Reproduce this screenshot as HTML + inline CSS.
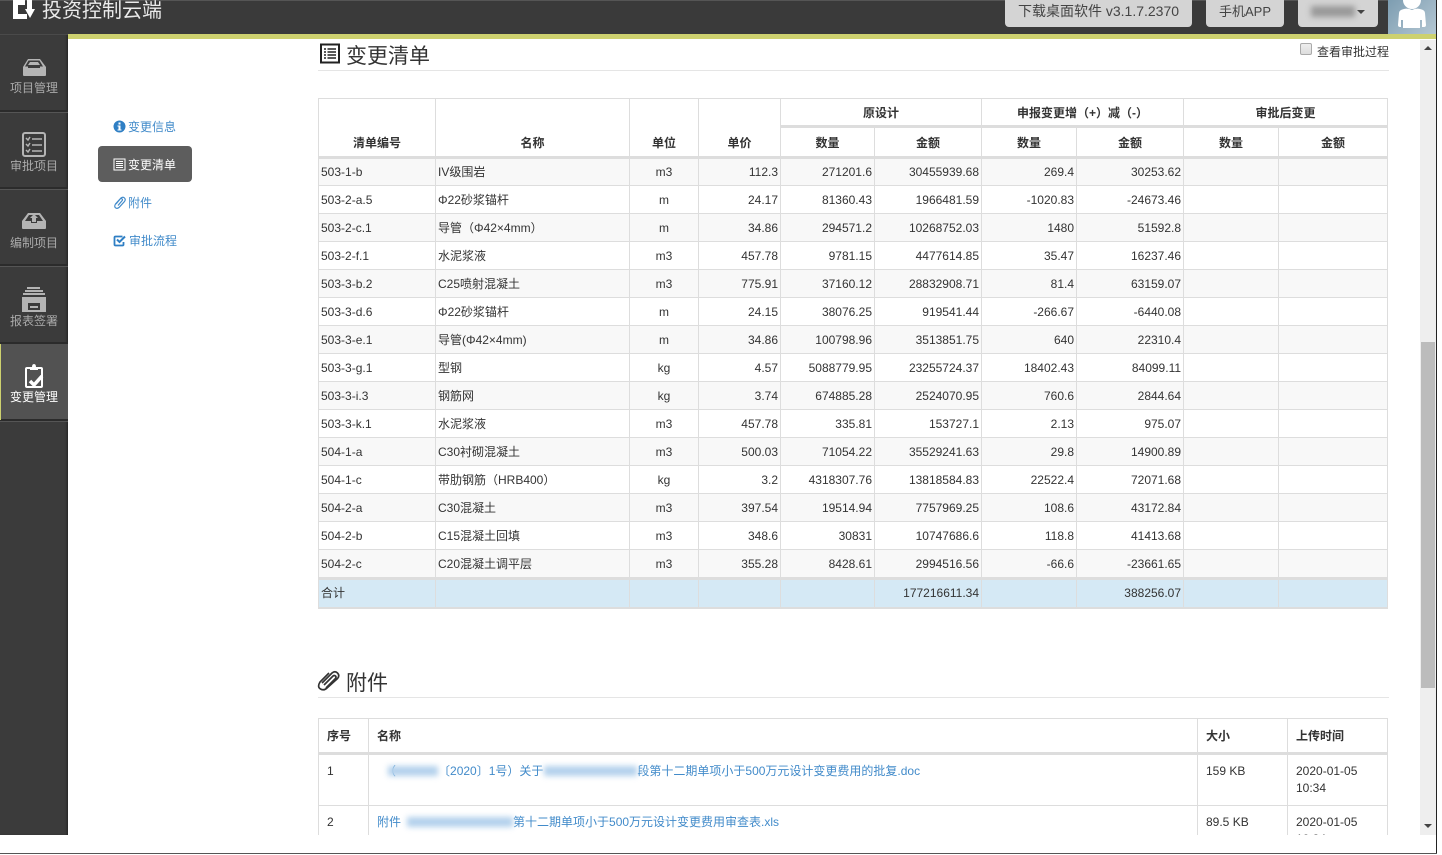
<!DOCTYPE html>
<html lang="zh-CN"><head><meta charset="utf-8"><title>变更清单</title>
<style>
html,body{margin:0;padding:0;background:#fff;overflow:hidden}
body{width:1442px;height:855px;position:relative;font:12px/18px "Liberation Sans","Noto Sans CJK SC",sans-serif;color:#333}
.a{position:absolute}
#frameR{left:1436px;top:0;width:1px;height:854px;background:#222}
#frameB{left:0;top:853px;width:1437px;height:1px;background:#555}
#hdr{left:0;top:0;width:1436px;height:34px;background:#3a3a3a;border-top:1px solid #555;box-sizing:border-box}
#logo{left:42px;top:-3px;font-size:20px;line-height:28px;color:#eaeaea;white-space:nowrap}
.btn{top:0;height:27px;background:#d4d4d4;border-radius:0 0 4px 4px;text-align:center;line-height:23px;font-size:14px;color:#444;white-space:nowrap}
#avatar{left:1388px;top:0;width:48px;height:34px;background:linear-gradient(135deg,#7d9db1,#b4c7d3);overflow:hidden}
#band{left:68px;top:34px;width:1368px;height:5px;background:#cdd16f}
#side{left:0;top:34px;width:68px;height:801px;background:#3b3b3b;box-shadow:inset -2px 0 2px -1px #222}
.nav{left:0;width:68px;height:76px;border-bottom:2px solid #2b2b2b;box-shadow:0 1px 0 #555;text-align:center;color:#aaa}
.nav span{position:absolute;left:0;right:0;white-space:nowrap}
.nav svg{position:absolute;left:0;top:0}
.sub{white-space:nowrap;color:#428bca;line-height:18px}
.sub svg{position:absolute;left:-15px;top:2px}
#pill{left:98px;top:146px;width:94px;height:36px;background:#5d5d5d;border-radius:4px}
.h{font-size:21px;line-height:30px;color:#333;white-space:nowrap}
.hr{height:1px;background:#e5e5e5}
table{position:absolute;border-collapse:collapse;table-layout:fixed;background:#fff}
td,th{border:1px solid #ddd;padding:0 2px;overflow:hidden;white-space:nowrap;box-sizing:border-box}
#t1{left:318px;top:98px;width:1069px}
#t1 td{height:28px;line-height:18px}
#t1 th{font-weight:bold;vertical-align:middle;text-align:center}
#t1 .r1 th{height:28px;padding-top:1px}
#t1 .r2 th{height:31px;padding-top:1px}
#t1 .r1 th.b{border-bottom:3px solid #ddd}
#t1 .r2 th{border-bottom:3px solid #ddd}
#t1 th.v{vertical-align:bottom;padding-bottom:4px;border-bottom:3px solid #ddd}
#t1 tbody tr:nth-child(odd) td{background:#f8f8f8}
.c{text-align:center}.n{text-align:right}
#t1 tr.last td{height:29px}
#t1 tr.tot td{background:#d5e9f5;border-top:3px solid #ddd;border-bottom:2px solid #ddd;height:29px}
#clip{left:318px;top:718px;width:1070px;height:117px;overflow:hidden}
#t2{left:0;top:0;width:1070px}
#t2 th{text-align:left;height:35px;padding:0 8px;border-bottom:3px solid #ddd;font-weight:bold}
#t2 td{padding:8px;vertical-align:top;white-space:normal;line-height:17px;height:51px}
#t2 a{color:#428bca;text-decoration:none;white-space:nowrap}
.bl{display:inline-block;height:10px;background:#b3d1ec;filter:blur(3px);vertical-align:-1px}
#track{left:1420px;top:40px;width:16px;height:795px;background:#eee}
#thumb{left:1421px;top:342px;width:14px;height:346px;background:#bcbcbc}
.up{left:1424px;top:46px;width:0;height:0;border:4px solid transparent;border-top:0;border-bottom:4px solid #444}
.dn{left:1424px;top:824px;width:0;height:0;border:4px solid transparent;border-bottom:0;border-top:4px solid #444}
</style></head><body>

<div class="a" id="hdr"></div>
<svg class="a" style="left:13px;top:0" width="22" height="21" viewBox="0 0 22 21"><path fill="#fff" d="M0 0h12v5H5v9h9v5H0z"/><path fill="#fff" d="M14 0h5v9h3l-5 9-5-9h2z"/></svg>
<div class="a" id="logo">投资控制云端</div>
<div class="a btn" style="left:1005px;width:187px">下载桌面软件 v3.1.7.2370</div>
<div class="a btn" style="left:1206px;width:78px;font-size:13px">手机APP</div>
<div class="a btn" style="left:1298px;width:80px"><span style="position:absolute;left:13px;top:6px;width:44px;height:11px;background:#999;filter:blur(3px)"></span><span style="position:absolute;left:59px;top:10px;border:4px solid transparent;border-bottom:0;border-top:4px solid #444"></span></div>
<div class="a" id="avatar"><svg width="48" height="34" viewBox="0 0 48 34"><circle cx="24" cy="0" r="9" fill="#fff"/><path fill="#fff" d="M11 13q0-3 5-4 4-1 8 1 4-2 8-1 5 1 5 4l1 12q0 2-2 2h-2v-7h-2v8H15v-8h-2v7h-1q-2 0-2-2z"/></svg></div>
<div class="a" id="band"></div>

<div class="a" id="side"></div>
<div class="a nav" style="top:34px;height:75px;border-top:1px solid #4a4a4a">
<svg width="68" height="50"><path fill="#b4b4b4" d="M28 24h12l6 8v8q0 1-1 1H24q-1 0-1-1v-8z"/><path fill="#3b3b3b" d="M28.500 25.500h11l3.500 6h-3v1.500h-12v-1.500h-3z"/><path fill="#b4b4b4" d="M30 27h8l2 3H28z"/></svg>
<span style="top:44px">项目管理</span></div>
<div class="a nav" style="top:111px;height:76px">
<svg width="68" height="60"><rect x="23" y="22" width="22" height="23" rx="2" fill="none" stroke="#b4b4b4" stroke-width="2"/><path fill="none" stroke="#b4b4b4" stroke-width="1.500" d="M26 27l2 2 2-3M26 33l2 2 2-3M26 39l2 2 2-3M32 28h10M32 34h10M32 40h10"/></svg>
<span style="top:46px">审批项目</span></div>
<div class="a nav" style="top:189px;height:75px">
<svg width="68" height="50"><path fill="#b4b4b4" d="M28 24h12l6 8v7q0 1-1 1H23q-1 0-1-1v-7z"/><path fill="#3b3b3b" d="M25 32h6v2h6v-2h6l-4-6H29z"/><path fill="#b4b4b4" d="M34 25l4 4h-2v4h-4v-4h-2z"/></svg>
<span style="top:45px">编制项目</span></div>
<div class="a nav" style="top:266px;height:76px">
<svg width="68" height="60"><path fill="#b4b4b4" d="M27 21h13v2H27zM25 24h18v2H25zM23 27h22v2H23zM22 31h24v15H22z"/><path fill="#3b3b3b" d="M28 37h12v7H28z"/><path fill="#b4b4b4" d="M30 40h8v2h-8z"/></svg>
<span style="top:46px">报表签署</span></div>
<div class="a nav" style="top:344px;height:75px;background:#525252;color:#fff">
<div class="a" style="left:0;top:0;width:1px;height:76px;background:#cdd16f"></div>
<svg width="68" height="50"><rect x="26" y="24" width="16" height="19" rx="1" fill="none" stroke="#fff" stroke-width="2"/><path fill="#fff" d="M30 23h2q0-3 2-3t2 3h2v3h-8z"/><path fill="none" stroke="#fff" stroke-width="3.500" d="M30 37l4 4 8-9"/></svg>
<span style="top:44px">变更管理</span></div>

<div class="a sub" style="left:128px;top:118px"><svg width="13" height="13" viewBox="0 0 13 13"><circle cx="6.500" cy="6.500" r="6" fill="#2f7fc4"/><path fill="#fff" d="M5.500 2.500h2v2h-2zM4.500 5.500h3v4h1v1h-4v-1h1v-3h-1z"/></svg>变更信息</div>
<div class="a" id="pill"></div>
<div class="a sub" style="left:128px;top:156px;color:#fff"><svg width="13" height="13" viewBox="0 0 13 13"><rect x="1" y="1" width="11" height="11" fill="none" stroke="#fff"/><path stroke="#fff" d="M3 3.500h7M3 5.500h7M3 7.500h7M3 9.500h7"/></svg>变更清单</div>
<div class="a sub" style="left:128px;top:194px"><svg width="13" height="13" viewBox="0 0 13 13"><path fill="none" stroke="#428bca" stroke-width="1.200" d="M3 8l5-6q2-1.500 3.500 0t0 3.500L6 11.500q-2 1.500-3.500.3T2.500 8L7 3q1-1 2-.2t0 2L5 9.500"/></svg>附件</div>
<div class="a sub" style="left:129px;top:232px"><svg style="left:-16px" width="13" height="13" viewBox="0 0 13 13"><path fill="none" stroke="#2f7fc4" stroke-width="1.800" d="M10.500 8v2.500q0 1-1 1h-7q-1 0-1-1v-7q0-1 1-1h7"/><path fill="none" stroke="#2f7fc4" stroke-width="2" d="M4 5.500l2.500 2.500L12 2.500"/></svg>审批流程</div>

<svg class="a" style="left:320px;top:43px" width="20" height="21" viewBox="0 0 20 21"><rect x="1" y="1.500" width="18" height="18" fill="none" stroke="#222" stroke-width="2"/><path stroke="#222" stroke-width="1.500" d="M4 6h2M7.500 6H16M4 9h2M7.500 9H16M4 12h2M7.500 12H16M4 15h2M7.500 15H16"/></svg>
<div class="a h" style="left:346px;top:42px">变更清单</div>
<div class="a" style="left:1300px;top:43px;width:10px;height:10px;border:1px solid #aaa;border-radius:2px;background:linear-gradient(#eee,#ddd)"></div>
<div class="a" style="left:1317px;top:43px;white-space:nowrap">查看审批过程</div>
<div class="a hr" style="left:318px;top:70px;width:1071px"></div>

<table id="t1">
<colgroup><col style="width:117px"><col style="width:194px"><col style="width:69px"><col style="width:82px"><col style="width:94px"><col style="width:107px"><col style="width:95px"><col style="width:107px"><col style="width:95px"><col style="width:109px"></colgroup>
<thead>
<tr class="r1"><th rowspan="2" class="v">清单编号</th><th rowspan="2" class="v">名称</th><th rowspan="2" class="v">单位</th><th rowspan="2" class="v">单价</th><th colspan="2" class="b">原设计</th><th colspan="2" class="b">申报变更增（+）减（-）</th><th colspan="2" class="b">审批后变更</th></tr>
<tr class="r2"><th>数量</th><th>金额</th><th>数量</th><th>金额</th><th>数量</th><th>金额</th></tr>
</thead>
<tbody>
<tr><td>503-1-b</td><td>IV级围岩</td><td class="c">m3</td><td class="n">112.3</td><td class="n">271201.6</td><td class="n">30455939.68</td><td class="n">269.4</td><td class="n">30253.62</td><td></td><td></td></tr>
<tr><td>503-2-a.5</td><td>Φ22砂浆锚杆</td><td class="c">m</td><td class="n">24.17</td><td class="n">81360.43</td><td class="n">1966481.59</td><td class="n">-1020.83</td><td class="n">-24673.46</td><td></td><td></td></tr>
<tr><td>503-2-c.1</td><td>导管（Φ42×4mm）</td><td class="c">m</td><td class="n">34.86</td><td class="n">294571.2</td><td class="n">10268752.03</td><td class="n">1480</td><td class="n">51592.8</td><td></td><td></td></tr>
<tr><td>503-2-f.1</td><td>水泥浆液</td><td class="c">m3</td><td class="n">457.78</td><td class="n">9781.15</td><td class="n">4477614.85</td><td class="n">35.47</td><td class="n">16237.46</td><td></td><td></td></tr>
<tr><td>503-3-b.2</td><td>C25喷射混凝土</td><td class="c">m3</td><td class="n">775.91</td><td class="n">37160.12</td><td class="n">28832908.71</td><td class="n">81.4</td><td class="n">63159.07</td><td></td><td></td></tr>
<tr><td>503-3-d.6</td><td>Φ22砂浆锚杆</td><td class="c">m</td><td class="n">24.15</td><td class="n">38076.25</td><td class="n">919541.44</td><td class="n">-266.67</td><td class="n">-6440.08</td><td></td><td></td></tr>
<tr><td>503-3-e.1</td><td>导管(Φ42×4mm)</td><td class="c">m</td><td class="n">34.86</td><td class="n">100798.96</td><td class="n">3513851.75</td><td class="n">640</td><td class="n">22310.4</td><td></td><td></td></tr>
<tr><td>503-3-g.1</td><td>型钢</td><td class="c">kg</td><td class="n">4.57</td><td class="n">5088779.95</td><td class="n">23255724.37</td><td class="n">18402.43</td><td class="n">84099.11</td><td></td><td></td></tr>
<tr><td>503-3-i.3</td><td>钢筋网</td><td class="c">kg</td><td class="n">3.74</td><td class="n">674885.28</td><td class="n">2524070.95</td><td class="n">760.6</td><td class="n">2844.64</td><td></td><td></td></tr>
<tr><td>503-3-k.1</td><td>水泥浆液</td><td class="c">m3</td><td class="n">457.78</td><td class="n">335.81</td><td class="n">153727.1</td><td class="n">2.13</td><td class="n">975.07</td><td></td><td></td></tr>
<tr><td>504-1-a</td><td>C30衬砌混凝土</td><td class="c">m3</td><td class="n">500.03</td><td class="n">71054.22</td><td class="n">35529241.63</td><td class="n">29.8</td><td class="n">14900.89</td><td></td><td></td></tr>
<tr><td>504-1-c</td><td>带肋钢筋（HRB400）</td><td class="c">kg</td><td class="n">3.2</td><td class="n">4318307.76</td><td class="n">13818584.83</td><td class="n">22522.4</td><td class="n">72071.68</td><td></td><td></td></tr>
<tr><td>504-2-a</td><td>C30混凝土</td><td class="c">m3</td><td class="n">397.54</td><td class="n">19514.94</td><td class="n">7757969.25</td><td class="n">108.6</td><td class="n">43172.84</td><td></td><td></td></tr>
<tr><td>504-2-b</td><td>C15混凝土回填</td><td class="c">m3</td><td class="n">348.6</td><td class="n">30831</td><td class="n">10747686.6</td><td class="n">118.8</td><td class="n">41413.68</td><td></td><td></td></tr>
<tr class="last"><td>504-2-c</td><td>C20混凝土调平层</td><td class="c">m3</td><td class="n">355.28</td><td class="n">8428.61</td><td class="n">2994516.56</td><td class="n">-66.6</td><td class="n">-23661.65</td><td></td><td></td></tr>
<tr class="tot"><td>合计</td><td></td><td></td><td></td><td></td><td class="n">177216611.34</td><td></td><td class="n">388256.07</td><td></td><td></td></tr>
</tbody></table>

<svg class="a" style="left:317px;top:670px" width="24" height="22" viewBox="0 0 24 22"><path fill="none" stroke="#333" stroke-width="1.700" d="M5 13L15 3q3-2.500 5.500 0t0 5.500L10 18q-3 3-6.500 1T3 12l9-9"/><path fill="none" stroke="#333" stroke-width="1.700" d="M7 15l9-9q1.500-1 2.500 0t0 2.500L9 18"/></svg>
<div class="a h" style="left:346px;top:669px">附件</div>
<div class="a hr" style="left:318px;top:697px;width:1071px"></div>

<div class="a" id="clip">
<table id="t2">
<colgroup><col style="width:50px"><col style="width:829px"><col style="width:90px"><col style="width:100px"></colgroup>
<thead><tr><th>序号</th><th>名称</th><th>大小</th><th>上传时间</th></tr></thead>
<tbody>
<tr><td>1</td><td><a href="#"><span style="margin-left:7px">（</span><span class="bl" style="width:50px;margin-left:-8px"></span>〔2020〕1号）关于<span class="bl" style="width:93px;margin-left:1px"></span>段第十二期单项小于500万元设计变更费用的批复.doc</a></td><td>159 KB</td><td>2020-01-05 10:34</td></tr>
<tr><td>2</td><td><a href="#">附件<span class="bl" style="width:106px;margin-left:6px"></span>第十二期单项小于500万元设计变更费用审查表.xls</a></td><td>89.5 KB</td><td>2020-01-05 10:34</td></tr>
</tbody></table>
</div>

<div class="a" id="track"></div><div class="a" id="thumb"></div><div class="a up"></div><div class="a dn"></div>
<div class="a" id="frameR"></div><div class="a" id="frameB"></div>
</body></html>
